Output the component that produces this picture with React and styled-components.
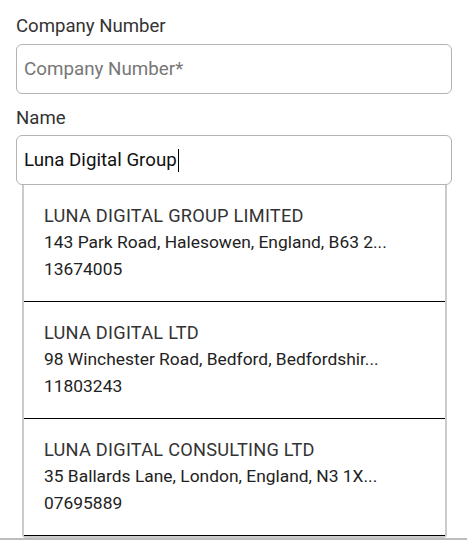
import styled, { createGlobalStyle } from 'styled-components'

const GlobalStyle = createGlobalStyle`
    html, body {
        margin: 0;
        padding: 0;
        background: #fff;
        font-family: Roboto, "Liberation Sans", sans-serif;
    }
`

const Page = styled.div`
    width: 467px;
    height: 540px;
    box-sizing: border-box;
    padding: 15px 15px 0 16px;
    overflow: hidden;
    border-bottom: 2px solid #bdbdbd;
`

const Field = styled.div`
    display: flex;
    flex-direction: column;
    margin-bottom: ${(props) => props.gap || 0}px;
`

const Label = styled.label`
    font-size: 18.6px;
    line-height: 22px;
    color: #333;
    margin-bottom: ${(props) => props.space || 7}px;
`

const Input = styled.input`
    box-sizing: border-box;
    height: 50px;
    width: 436px;
    border: 1px solid #b3b3b3;
    border-radius: 6px;
    padding: 0 7px;
    font-family: inherit;
    font-size: 18.7px;
    color: #222;
    outline: none;
    &::placeholder {
        color: #777;
        font-size: 18.8px;
    }
`

const FakeInput = styled.div`
    box-sizing: border-box;
    height: 50px;
    width: 436px;
    border: 1px solid #b3b3b3;
    border-radius: 6px;
    padding: 0 7px;
    font-size: 18.7px;
    color: #111;
    display: flex;
    align-items: center;
`

const Caret = styled.span`
    display: inline-block;
    width: 1px;
    height: 23px;
    background: #000;
    margin-left: 1px;
`

const Dropdown = styled.ul`
    list-style: none;
    margin: 0 6px;
    padding: 0;
    width: 425px;
    box-sizing: border-box;
    border: 2px solid #cbcbcb;
    border-top: none;
    border-radius: 0 0 4px 4px;
`

const Option = styled.li`
    padding: 17px 20px 18px 20px;
    border-bottom: 1px solid #000;
    font-size: 17.4px;
    line-height: 27px;
    color: #222;
    cursor: pointer;
`

const OptionTitle = styled.div`
    color: #333;
    font-size: 18.2px;
    letter-spacing: 0.25px;
    text-transform: uppercase;
`

const OptionLine = styled.div`
    white-space: nowrap;
`

const companies = [
    { name: 'LUNA DIGITAL GROUP LIMITED', address: '143 Park Road, Halesowen, England, B63 2...', number: '13674005' },
    { name: 'LUNA DIGITAL LTD', address: '98 Winchester Road, Bedford, Bedfordshir...', number: '11803243' },
    { name: 'LUNA DIGITAL CONSULTING LTD', address: '35 Ballards Lane, London, England, N3 1X...', number: '07695889' },
]

function App() {
    return (
        <>
            <GlobalStyle />
            <Page>
                <Field gap={13}>
                    <Label htmlFor="number">Company Number</Label>
                    <Input id="number" type="text" placeholder="Company Number*" />
                </Field>
                <Field>
                    <Label space={6}>Name</Label>
                    <FakeInput>
                        Luna Digital Group<Caret />
                    </FakeInput>
                </Field>
                <Dropdown>
                    {companies.map((c) => (
                        <Option key={c.number}>
                            <OptionTitle>{c.name}</OptionTitle>
                            <OptionLine>{c.address}</OptionLine>
                            <OptionLine>{c.number}</OptionLine>
                        </Option>
                    ))}
                </Dropdown>
            </Page>
        </>
    )
}

export default App
